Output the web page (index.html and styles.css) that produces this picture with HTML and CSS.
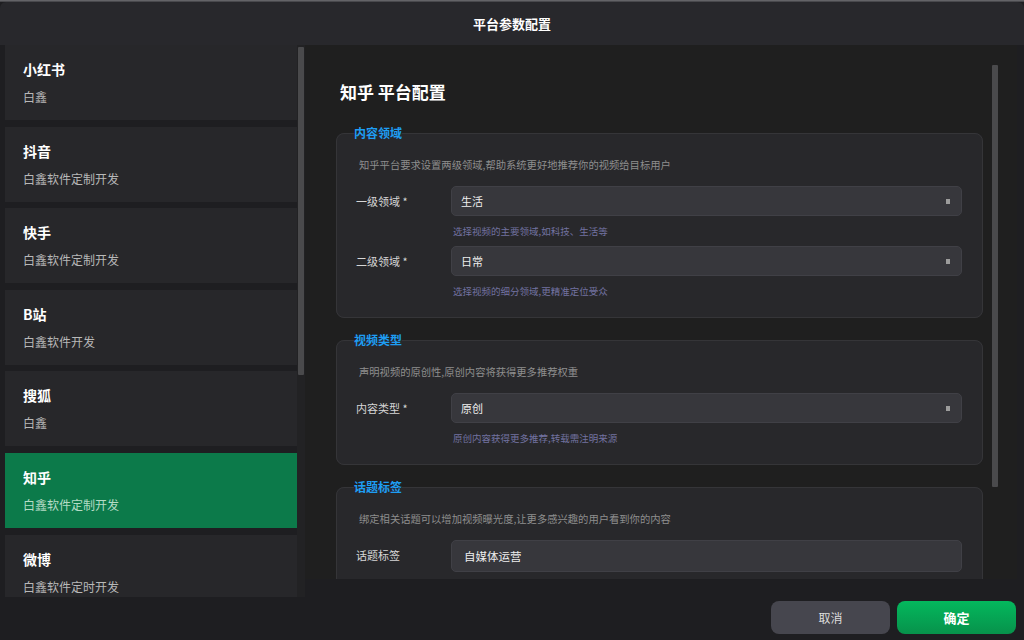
FILE: index.html
```html
<!DOCTYPE html>
<html lang="zh-CN">
<head>
  <meta charset="UTF-8">
  <meta name="viewport" content="width=device-width, initial-scale=1.0">
  <title>平台参数配置</title>
  <link rel="stylesheet" href="styles.css">
</head>
<body>

  <!-- 窗口顶部细线 -->
  <div class="topline"></div>

  <div class="dialog">
    <!-- 标题栏 -->
    <header class="dialog-title">平台参数配置</header>

    <div class="dialog-body">
      <!-- 左侧平台列表 -->
      <aside class="sidebar">
        <ul class="platform-list">
          <li class="platform-card"><h3>小红书</h3><p>白鑫</p></li>
          <li class="platform-card"><h3>抖音</h3><p>白鑫软件定制开发</p></li>
          <li class="platform-card"><h3>快手</h3><p>白鑫软件定制开发</p></li>
          <li class="platform-card"><h3>B站</h3><p>白鑫软件开发</p></li>
          <li class="platform-card"><h3>搜狐</h3><p>白鑫</p></li>
          <li class="platform-card active"><h3>知乎</h3><p>白鑫软件定制开发</p></li>
          <li class="platform-card"><h3>微博</h3><p>白鑫软件定时开发</p></li>
        </ul>
        <div class="scroll-track side-track"><div class="scroll-thumb"></div></div>
      </aside>

      <!-- 右侧配置面板 -->
      <main class="panel">
        <div class="panel-content">
          <h2 class="panel-title">知乎 平台配置</h2>

          <fieldset class="group">
            <legend>内容领域</legend>
            <p class="group-desc">知乎平台要求设置两级领域,帮助系统更好地推荐你的视频给目标用户</p>
            <div class="field">
              <label>一级领域 *</label>
              <div class="field-main">
                <div class="select">生活<span class="caret"></span></div>
                <p class="hint">选择视频的主要领域,如科技、生活等</p>
              </div>
            </div>
            <div class="field">
              <label>二级领域 *</label>
              <div class="field-main">
                <div class="select">日常<span class="caret"></span></div>
                <p class="hint">选择视频的细分领域,更精准定位受众</p>
              </div>
            </div>
          </fieldset>

          <fieldset class="group">
            <legend>视频类型</legend>
            <p class="group-desc">声明视频的原创性,原创内容将获得更多推荐权重</p>
            <div class="field">
              <label>内容类型 *</label>
              <div class="field-main">
                <div class="select">原创<span class="caret"></span></div>
                <p class="hint">原创内容获得更多推荐,转载需注明来源</p>
              </div>
            </div>
          </fieldset>

          <fieldset class="group">
            <legend>话题标签</legend>
            <p class="group-desc">绑定相关话题可以增加视频曝光度,让更多感兴趣的用户看到你的内容</p>
            <div class="field">
              <label>话题标签</label>
              <div class="field-main">
                <div class="select input">自媒体运营</div>
              </div>
            </div>
          </fieldset>
        </div>
        <div class="scroll-track panel-track"><div class="scroll-thumb"></div></div>
      </main>
    </div>

    <!-- 底部按钮 -->
    <footer class="dialog-footer">
      <button class="btn btn-cancel">取消</button>
      <button class="btn btn-ok">确定</button>
    </footer>
  </div>

</body>
</html>
```

FILE: styles.css
```css
/* ========== 共通 ========== */
:root {
  --bg-dark: #1e1e21;
  --bg-title: #28282c;
  --card-bg: #27272a;
  --panel-bg: #1f1f1f;
  --group-bg: #28282b;
  --input-bg: #37373c;
  --accent-blue: #1e9df3;
  --accent-green: #0c7a4a;
}

* {
  box-sizing: border-box;
}

body {
  margin: 0;
  width: 1024px;
  height: 640px;
  overflow: hidden;
  background: var(--bg-dark);
  color: #eee;
  font-family: "Noto Sans CJK SC", "Noto Sans", sans-serif;
}

.topline {
  height: 2px;
  background: linear-gradient(#707074, #3c3c40);
}

/* ========== 对话框 ========== */
.dialog {
  height: 638px;
  background: var(--bg-dark);
  border-radius: 6px 6px 0 0;
  overflow: hidden;
}

.dialog-title {
  height: 43px;
  background: var(--bg-title);
  display: flex;
  align-items: center;
  justify-content: center;
  font-size: 13px;
  font-weight: 700;
  color: #fff;
}

.dialog-body {
  display: flex;
  align-items: flex-start;
}

/* ========== 左侧列表 ========== */
.sidebar {
  width: 305px;
  height: 552px;
  padding-left: 5px;
  display: flex;
  overflow: hidden;
}

.platform-list {
  list-style: none;
  margin: 0;
  padding: 0;
  flex: 1;
  display: flex;
  flex-direction: column;
  gap: 6.6px;
}

.platform-card {
  flex-shrink: 0;
  height: 75px;
  padding: 14px 18px 0;
  background: var(--card-bg);
}
.platform-card h3 {
  margin: 0;
  font-size: 14px;
  line-height: 20px;
  font-weight: 700;
  color: #fff;
}
.platform-card p {
  margin: 9px 0 0;
  font-size: 12px;
  line-height: 18px;
  color: #b8b8b8;
}
.platform-card.active {
  background: var(--accent-green);
}
.platform-card.active p {
  color: #b5dcc6;
}

/* 滚动条 */
.scroll-track {
  flex-shrink: 0;
  width: 8px;
  padding: 0 1px;
}
.scroll-thumb {
  width: 6px;
  background: #4a4a4c;
  border-radius: 1px;
}
.side-track {
  background: #222224;
  padding-top: 2px;
}
.side-track .scroll-thumb {
  height: 328px;
}

/* ========== 右侧面板 ========== */
.panel {
  flex: 1;
  height: 534px;
  margin-right: 7px;
  background: var(--panel-bg);
  display: flex;
  overflow: hidden;
}

.panel-content {
  flex: 1;
  padding: 35px 9px 0 31px;
}

.panel-title {
  margin: 0 0 21px;
  padding-left: 4px;
  font-size: 17px;
  line-height: 24px;
  font-weight: 700;
  color: #fff;
}

.group {
  margin: 0 0 14px;
  padding: 0 20px 19px 17px;
  background: var(--group-bg);
  border: 1px solid #353538;
  border-radius: 8px;
}
.group legend {
  padding: 0;
  font-size: 12px;
  line-height: 16px;
  font-weight: 700;
  color: var(--accent-blue);
}

.group-desc {
  margin: 16px 0 13px 5px;
  font-size: 10.3px;
  line-height: 16px;
  color: #8e8e8e;
}

.field {
  display: flex;
  margin-top: 8px;
}
.field:first-of-type {
  margin-top: 0;
}
.field label {
  width: 97px;
  flex-shrink: 0;
  padding-left: 2px;
  font-size: 11px;
  line-height: 30px;
  color: #d6d6d6;
}
.field-main {
  flex: 1;
}

.select {
  height: 30px;
  display: flex;
  align-items: center;
  justify-content: space-between;
  padding: 0 11px 0 9px;
  background: var(--input-bg);
  border: 1px solid #404046;
  border-radius: 5px;
  font-size: 11px;
  color: #eee;
}
.select.input {
  height: 32px;
  padding-left: 12px;
  font-size: 11.5px;
}
.caret {
  width: 4px;
  height: 5px;
  background: #9c9c9c;
}

.hint {
  margin: 8px 0 0 2px;
  font-size: 9.5px;
  line-height: 14px;
  color: #7272a0;
}

.panel-track {
  padding-top: 20px;
  margin-right: 19px;
  width: 6px;
  padding-left: 0;
  padding-right: 0;
}
.panel-track .scroll-thumb {
  height: 422px;
}

/* ========== 底部按钮 ========== */
.dialog-footer {
  display: flex;
  justify-content: flex-end;
  gap: 7px;
  padding: 4px 8px 0 0;
}

.btn {
  width: 119px;
  height: 33px;
  border: none;
  border-radius: 8px;
  font-family: inherit;
  font-size: 12px;
  cursor: pointer;
}
.btn-cancel {
  background: #46464e;
  color: #ddd;
}
.btn-ok {
  background: linear-gradient(#04b85d, #07924b);
  color: #fff;
  font-weight: 700;
  font-size: 13px;
}
```
